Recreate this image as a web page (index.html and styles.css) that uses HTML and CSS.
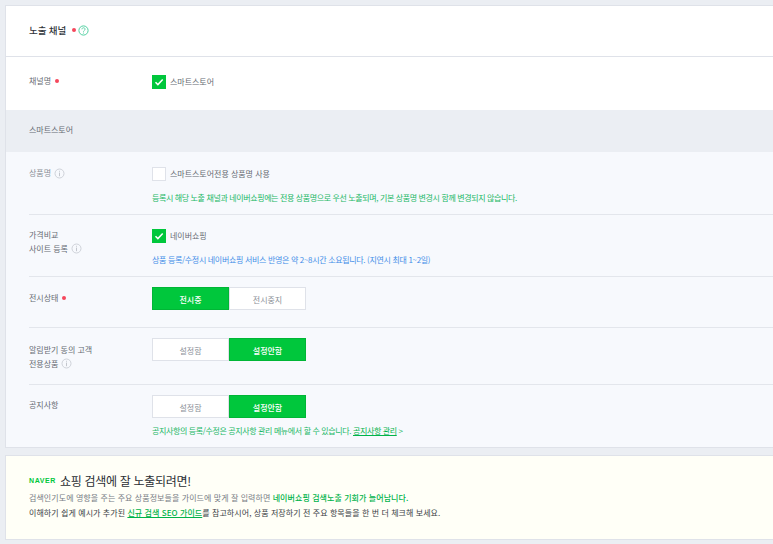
FILE: index.html
```html
<!DOCTYPE html>
<html lang="ko">
<head>
<meta charset="utf-8">
<title>노출 채널</title>
<link rel="stylesheet" href="styles.css">
</head>
<body>
<section class="panel">
  <header class="panel-head">
    <h2 class="panel-title">노출 채널</h2>
    <span class="dot dot-title"></span>
    <svg class="help" width="11" height="11" viewBox="0 0 11 11"><circle cx="5.5" cy="5.5" r="4.6" fill="none" stroke="#4fcfa0" stroke-width="1"/><path d="M3.9 4.3c0-2 3.2-2 3.2-.1 0 1.2-1.6 1.2-1.6 2.5" fill="none" stroke="#4fcfa0" stroke-width="0.9"/><circle cx="5.5" cy="8" r=".6" fill="#4fcfa0"/></svg>
  </header>
  <div class="channel-row">
    <div class="label">채널명<span class="dot"></span></div>
    <label class="check"><span class="box on"><svg width="14" height="14" viewBox="0 0 14 14"><path d="M3.5 7.2l2.4 2.4 4.8-5" fill="none" stroke="#fff" stroke-width="1.5"/></svg></span>스마트스토어</label>
  </div>
  <div class="sub-head">스마트스토어</div>
  <div class="sub-body">
    <div class="row row-name">
      <div class="label muted">상품명<svg class="info" width="11" height="11" viewBox="0 0 11 11"><circle cx="5.5" cy="5.5" r="4.5" fill="none" stroke="#c4c8cf" stroke-width="0.8"/><path d="M5.5 4.6v3.6M5.5 2.8v.9" stroke="#b5b9c0" stroke-width="0.8"/></svg></div>
      <div class="control">
        <label class="check"><span class="box"></span>스마트스토어전용 상품명 사용</label>
        <p class="note green">등록시 해당 노출 채널과 네이버쇼핑에는 전용 상품명으로 우선 노출되며, 기본 상품명 변경시 함께 변경되지 않습니다.</p>
      </div>
    </div>
    <div class="row row-compare">
      <div class="label two">가격비교<br>사이트 등록<svg class="info" width="11" height="11" viewBox="0 0 11 11"><circle cx="5.5" cy="5.5" r="4.5" fill="none" stroke="#c4c8cf" stroke-width="0.8"/><path d="M5.5 4.6v3.6M5.5 2.8v.9" stroke="#b5b9c0" stroke-width="0.8"/></svg></div>
      <div class="control">
        <label class="check"><span class="box on"><svg width="14" height="14" viewBox="0 0 14 14"><path d="M3.5 7.2l2.4 2.4 4.8-5" fill="none" stroke="#fff" stroke-width="1.5"/></svg></span>네이버쇼핑</label>
        <p class="note blue">상품 등록/수정시 네이버쇼핑 서비스 반영은 약 2~8시간 소요됩니다. (지연시 최대 1~2일)</p>
      </div>
    </div>
    <div class="row row-status">
      <div class="label">전시상태<span class="dot"></span></div>
      <div class="control">
        <div class="toggle"><span class="opt active">전시중</span><span class="opt">전시중지</span></div>
      </div>
    </div>
    <div class="row row-alarm">
      <div class="label two">알림받기 동의 고객<br>전용상품<svg class="info" width="11" height="11" viewBox="0 0 11 11"><circle cx="5.5" cy="5.5" r="4.5" fill="none" stroke="#c4c8cf" stroke-width="0.8"/><path d="M5.5 4.6v3.6M5.5 2.8v.9" stroke="#b5b9c0" stroke-width="0.8"/></svg></div>
      <div class="control">
        <div class="toggle"><span class="opt">설정함</span><span class="opt active">설정안함</span></div>
      </div>
    </div>
    <div class="row row-notice">
      <div class="label">공지사항</div>
      <div class="control">
        <div class="toggle"><span class="opt">설정함</span><span class="opt active">설정안함</span></div>
        <p class="note green note-tight">공지사항의 등록/수정은 공지사항 관리 메뉴에서 할 수 있습니다. <a class="link" href="#">공지사항 관리</a> &gt;</p>
      </div>
    </div>
  </div>
</section>
<section class="tip">
  <h3 class="tip-title"><span class="naver">NAVER</span>쇼핑 검색에 잘 노출되려면!</h3>
  <p class="tip-line">검색인기도에 영향을 주는 주요 상품정보들을 가이드에 맞게 잘 입력하면 <strong class="hl">네이버쇼핑 검색노출 기회가 늘어납니다.</strong></p>
  <p class="tip-line dark">이해하기 쉽게 예시가 추가된 <a class="tip-link" href="#">신규 검색 SEO 가이드</a>를 참고하시어, 상품 저장하기 전 주요 항목들을 한 번 더 체크해 보세요.</p>
</section>
</body>
</html>
```
FILE: styles.css
```css
* { box-sizing: border-box; }
html, body { height: 100%; }
body {
  margin: 0;
  padding: 5px 0 0 5px;
  width: 773px;
  height: 544px;
  overflow: hidden;
  background: #ebeef3;
  font-family: "Noto Sans CJK KR", "Noto Sans", sans-serif;
  font-size: 8px;
  letter-spacing: -0.02px;
  color: #666b73;
}
.panel {
  width: 790px;
  height: 443px;
  background: #fff;
  border: 1px solid #dfe2e9;
}
.panel-head {
  height: 51px;
  padding: 0 0 2px 23px;
  display: flex;
  align-items: center;
  border-bottom: 1px solid #dfe2e9;
}
.panel-title { margin: 0; font-size: 9.5px; font-weight: 500; color: #30343a; line-height: 12px; letter-spacing: -0.1px; }
.dot { display: inline-block; width: 4px; height: 4px; border-radius: 50%; background: #f5475c; margin-left: 4px; vertical-align: 1px; }
.dot-title { margin-left: 6px; }
.help { margin-left: 2px; }
.info { margin-left: 3px; vertical-align: -2.5px; }
.channel-row {
  height: 53px;
  padding: 18px 0 0 23px;
  display: flex;
  align-items: flex-start;
}
.channel-row .label { margin-top: -1px; }
.label { width: 123px; line-height: 14px; flex: none; }
.muted { color: #8a8f97; }
.check { display: flex; align-items: center; height: 14px; line-height: 14px; }
.box {
  width: 14px; height: 14px; margin-right: 4px;
  background: #fff; border: 1px solid #dfe2e9; flex: none;
  display: flex;
}
.box.on { background: #00c73c; border: 0; }
.sub-head {
  height: 42px;
  background: #ebeef3;
  padding-left: 23px;
  line-height: 40px;
}
.sub-body { background: #f7f9fd; height: 295px; padding-left: 23px; }
.row { display: flex; border-bottom: 1px solid #e3e6ec; }
.row:last-child { border-bottom: 0; }
.row-name { height: 63px; padding-top: 15px; }
.row-name .label { margin-top: -1px; }
.row-compare { height: 62px; padding-top: 14px; }
.row-compare .label { margin-top: -1px; }
.row-status { height: 51px; padding-top: 10px; }
.row-alarm { height: 57px; padding-top: 10px; }
.row-notice { padding-top: 10px; }
.two { line-height: 13.5px; }
.row-alarm .two { padding-top: 5px; }
.row-status .label { padding-top: 4px; }
.row-notice .label { padding-top: 3px; }
.note { margin: 0; white-space: nowrap; line-height: 12px; letter-spacing: -0.38px; }
.note.blue { letter-spacing: -0.33px; }
.row-name .note { margin-top: 11px; }
.row-compare .note { margin-top: 11px; }
.note-tight { margin-top: 7px; }
.green { color: #19b865; }
.blue { color: #3f8ee8; }
.link { color: #00b34a; text-decoration: underline; }
.toggle { display: flex; width: 154px; height: 23px; }
.opt {
  flex: 1;
  background: #fff;
  border: 1px solid #dfe2e9;
  color: #8a8f97;
  text-align: center;
  line-height: 24px;
}
.opt.active { background: #00c73c; border-color: #00b636; color: #fff; font-weight: 500; }
.tip {
  width: 790px;
  height: 85px;
  margin-top: 7px;
  background: #fffff7;
  border: 1px solid #dfe2e9;
  padding: 15px 0 0 23px;
}
.tip-title {
  margin: 0;
  font-size: 12px;
  font-weight: 400;
  color: #2a2d33;
  line-height: 19px;
  letter-spacing: -0.3px;
  display: flex;
  align-items: center;
}
.naver {
  font-family: "Liberation Sans", sans-serif;
  font-size: 7px;
  font-weight: 700;
  color: #00c73c;
  letter-spacing: 0.6px;
  margin-right: 4px;
}
.tip-line { margin: 0; line-height: 15px; color: #777c84; white-space: nowrap; letter-spacing: 0.07px; }
.tip-line.dark { color: #3a3e45; }
.hl { color: #00b34a; font-weight: 500; }
.tip-link { color: #00b34a; text-decoration: underline; font-weight: 500; }
```
